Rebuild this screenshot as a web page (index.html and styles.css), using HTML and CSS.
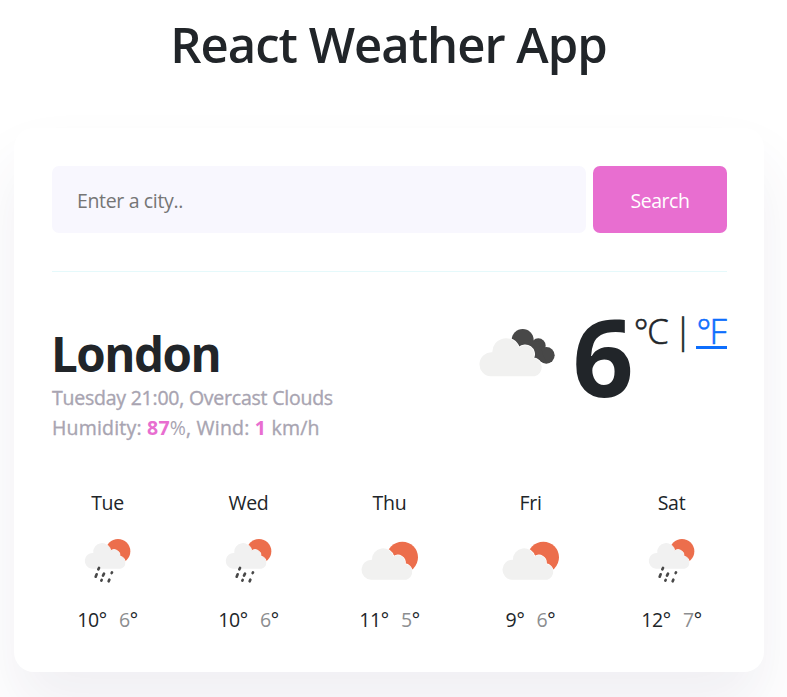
FILE: index.html
```html
<!DOCTYPE html>
<html lang="en">
<head>
<meta charset="utf-8">
<title>React Weather App</title>
<link rel="stylesheet" href="styles.css">
</head>
<body>
<svg class="defs" width="0" height="0" aria-hidden="true">
  <symbol id="overcast" viewBox="36 65 240 156">
    <g fill="#484848"><circle cx="173" cy="104" r="33"/><circle cx="220" cy="121" r="22"/><circle cx="244" cy="150" r="25"/><path d="M173 104L220 110L244 174L200 160Z"/></g>
    <path d="M77 213A36 36 0 0 1 82 141A41 41 0 0 1 162 127A27 27 0 0 1 205 158A28 28 0 0 1 209 213Z" fill="#f1f1f0" stroke="#fff" stroke-width="5" paint-order="stroke"/>
  </symbol>
  <symbol id="partly" viewBox="60 165 180 123">
    <circle cx="187" cy="217" r="47" fill="#ec6e4c"/>
    <path d="M93 284A30 30 0 0 1 96 224A33 33 0 0 1 161 215A22 22 0 0 1 195 237A24 24 0 0 1 199 284Z" fill="#f1f1f0" stroke="#fff" stroke-width="4" paint-order="stroke"/>
  </symbol>
  <symbol id="rain" viewBox="68 155 147 141">
    <circle cx="173" cy="198" r="37" fill="#ec6e4c"/>
    <path d="M95 250A23.500 23.500 0 0 1 99 203A26 26 0 0 1 151 196A18 18 0 0 1 179 213A19 19 0 0 1 181 250Z" fill="#f1f1f1" stroke="#fff" stroke-width="3" paint-order="stroke"/>
    <path d="M114 252l2-4M106 274l3-7M128 271l3-6M154 263l1-2M123 286l1-2M145 288l2-5" fill="none" stroke="#484848" stroke-width="8" stroke-linecap="round"/>
  </symbol>
</svg>
<h1 class="title">React Weather App</h1>
<main class="card">
  <form class="search">
    <input class="city-input" type="text" placeholder="Enter a city..">
    <button class="search-button" type="button">Search</button>
  </form>
  <section class="current">
    <div class="place">
      <h2 class="city">London</h2>
      <p class="details day">Tuesday 21:00, Overcast Clouds</p>
      <p class="details air">Humidity: <strong>87</strong><span class="percent">%</span>, Wind: <strong>1</strong> km/h</p>
    </div>
    <div class="temperature">
      <svg class="current-icon"><use href="#overcast"/></svg>
      <span class="value">6</span>
      <span class="units">°C | <a href="#">°F</a></span>
    </div>
  </section>
  <section class="forecast">
    <div class="day-column"><div class="day-name">Tue</div><div class="icon-box"><svg class="rain-icon"><use href="#rain"/></svg></div><div class="range"><span>10°</span><span><i>6</i>°</span></div></div>
    <div class="day-column"><div class="day-name">Wed</div><div class="icon-box"><svg class="rain-icon"><use href="#rain"/></svg></div><div class="range"><span>10°</span><span><i>6</i>°</span></div></div>
    <div class="day-column"><div class="day-name">Thu</div><div class="icon-box"><svg class="partly-icon"><use href="#partly"/></svg></div><div class="range"><span>11°</span><span><i>5</i>°</span></div></div>
    <div class="day-column"><div class="day-name">Fri</div><div class="icon-box"><svg class="partly-icon"><use href="#partly"/></svg></div><div class="range"><span>9°</span><span><i>6</i>°</span></div></div>
    <div class="day-column"><div class="day-name">Sat</div><div class="icon-box"><svg class="rain-icon"><use href="#rain"/></svg></div><div class="range"><span>12°</span><span><i>7</i>°</span></div></div>
  </section>
</main>
</body>
</html>
```
FILE: styles.css
```css
* { box-sizing: border-box; }
body {
  margin: 0;
  height: 697px;
  overflow: hidden;
  background: #fff;
  color: #212529;
  font-family: "Segoe UI", "Open Sans", "Noto Sans", sans-serif;
  font-size: 19.5px;
  line-height: 30px;
}
.defs { position: absolute; }
h1, h2, p { margin: 0; }
.title {
  width: 777px;
  padding-top: 14px;
  height: 128px;
  text-align: center;
  font-size: 49px;
  font-weight: 600;
  line-height: 60px;
  letter-spacing: -1px;
}
.card {
  width: 750px;
  height: 544px;
  margin-left: 14px;
  padding: 38px 37px 0 38px;
  background: #fff;
  border-radius: 20px;
  box-shadow: 0 37.500px 62.500px rgba(65, 50, 100, 0.08);
}
.search {
  display: flex;
  gap: 7px;
  height: 106px;
  padding-bottom: 38px;
  border-bottom: 1px solid #e5f9fb;
}
.city-input {
  width: 534px;
  height: 67px;
  padding: 1px 25px 0;
  border: 0;
  border-radius: 7px;
  background: #f8f7fe;
  font: inherit;
  letter-spacing: -0.35px;
}
.city-input::placeholder { color: #757575; opacity: 1; }
.search-button {
  flex: 1;
  height: 67px;
  padding: 3px 0 0;
  border: 0;
  border-radius: 7px;
  background: #e86ed0;
  color: #fff;
  font: inherit;
  letter-spacing: -0.45px;
}
.current {
  display: flex;
  justify-content: space-between;
  height: 216px;
}
.place { padding-top: 53px; }
.city {
  height: 58px;
  margin-left: -1px;
  font-size: 47.5px;
  font-weight: 700;
  line-height: 58px;
  letter-spacing: -1.5px;
}
.details {
  color: #a8a4b1;
  white-space: nowrap;
  -webkit-text-stroke: 0.35px currentColor;
}
.day { letter-spacing: -0.23px; }
.air { letter-spacing: 0.2px; }
.details strong { color: #e86ed0; font-weight: 700; -webkit-text-stroke: 0; }
.percent { -webkit-text-stroke: 0; }
.temperature {
  display: flex;
  align-items: flex-start;
}
.current-icon {
  width: 80px;
  height: 52px;
  margin: 55px 16px 0 0;
}
.value {
  font-size: 107px;
  font-weight: 700;
  line-height: 120px;
  margin-top: 24px;
}
.units {
  font-size: 34.500px;
  font-weight: 300;
  line-height: 50px;
  margin: 34px 0 0;
  letter-spacing: -1.3px;
  word-spacing: -1.3px;
  white-space: nowrap;
  -webkit-text-stroke: 0.6px currentColor;
}
.units a {
  display: inline-block;
  height: 43px;
  margin-left: -1px;
  padding-right: 2px;
  border-bottom: 3px solid #0d6efd;
  color: #0d6efd;
  letter-spacing: -1.8px;
  line-height: 50px;
  text-decoration: none;
}
.forecast {
  display: grid;
  grid-template-columns: repeat(5, 141px);
  margin: 0 -15px;
  text-align: center;
  letter-spacing: -0.3px;
}
.icon-box {
  display: flex;
  align-items: center;
  justify-content: center;
  height: 87px;
  padding-bottom: 2px;
}
.rain-icon { width: 49px; height: 47px; }
.partly-icon { width: 60px; height: 41px; }
.range { display: flex; justify-content: center; gap: 12px; }
.range i { font-style: normal; color: #8c8e90; }
```
